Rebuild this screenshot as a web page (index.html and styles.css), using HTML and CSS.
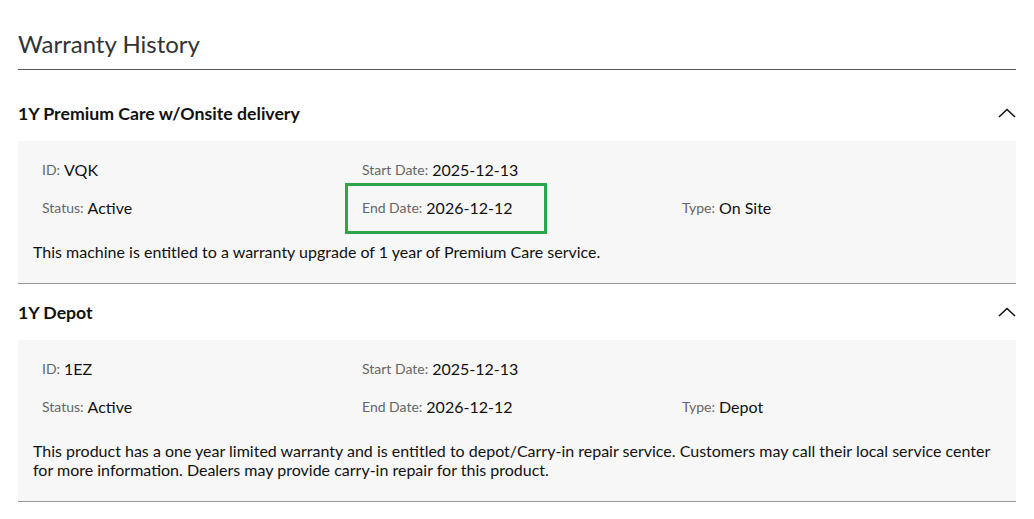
FILE: index.html
```html
<!DOCTYPE html>
<html lang="en">
<head>
<meta charset="utf-8">
<title>Warranty History</title>
<link rel="stylesheet" href="styles.css">
</head>
<body>
<div class="page">
  <h1 class="page-title">Warranty History</h1>

  <section class="warranty first">
    <div class="warranty-head">
      <h2 class="warranty-name">1Y Premium Care w/Onsite delivery</h2>
      <svg class="chevron" width="18" height="10" viewBox="0 0 18 10"><polyline points="1,9 9,1.5 17,9" fill="none" stroke="#111" stroke-width="1.6"/></svg>
    </div>
    <div class="panel">
      <div class="fields">
        <div class="field"><span class="label">ID:</span> <span class="value">VQK</span></div>
        <div class="field"><span class="label">Start Date:</span> <span class="value">2025-12-13</span></div>
        <div class="field"></div>
        <div class="field"><span class="label">Status:</span> <span class="value">Active</span></div>
        <div class="field highlighted"><span class="label">End Date:</span> <span class="value">2026-12-12</span></div>
        <div class="field"><span class="label">Type:</span> <span class="value">On Site</span></div>
      </div>
      <p class="desc">This machine is entitled to a warranty upgrade of 1 year of Premium Care service.</p>
    </div>
  </section>

  <section class="warranty">
    <div class="warranty-head">
      <h2 class="warranty-name">1Y Depot</h2>
      <svg class="chevron" width="18" height="10" viewBox="0 0 18 10"><polyline points="1,9 9,1.5 17,9" fill="none" stroke="#111" stroke-width="1.6"/></svg>
    </div>
    <div class="panel">
      <div class="fields">
        <div class="field"><span class="label">ID:</span> <span class="value">1EZ</span></div>
        <div class="field"><span class="label">Start Date:</span> <span class="value">2025-12-13</span></div>
        <div class="field"></div>
        <div class="field"><span class="label">Status:</span> <span class="value">Active</span></div>
        <div class="field"><span class="label">End Date:</span> <span class="value">2026-12-12</span></div>
        <div class="field"><span class="label">Type:</span> <span class="value">Depot</span></div>
      </div>
      <p class="desc">This product has a one year limited warranty and is entitled to depot/Carry-in repair service. Customers may call their local service center for more information. Dealers may provide carry-in repair for this product.</p>
    </div>
  </section>
</div>
</body>
</html>
```

FILE: styles.css
```css
* { box-sizing: border-box; }
html, body { margin: 0; padding: 0; background: #fff; }
body {
  font-family: Lato, "Open Sans", Arial, sans-serif;
  color: #111;
}
.page {
  padding: 0 18px;
}
.page-title {
  margin: 0;
  padding-top: 29px;
  font-size: 24px;
  font-weight: 400;
  line-height: 29px;
  color: #333;
  padding-bottom: 11px;
  border-bottom: 1px solid #555;
}
.warranty {
  border-bottom: 1px solid #999;
}
.warranty-head {
  display: flex;
  align-items: center;
  justify-content: space-between;
  height: 56px;
  padding-top: 2px;
}
.warranty.first .warranty-head {
  height: 71px;
  padding-top: 17px;
}
.warranty-name {
  margin: 0;
  font-size: 17.7px;
  font-weight: 700;
  line-height: 22px;
  color: #111;
}
.chevron { display: block; margin-top: -2px; }
.panel {
  background: #f7f7f7;
  padding: 9px 15px 22px;
}
.fields {
  display: grid;
  grid-template-columns: 320px 320px 1fr;
  grid-auto-rows: 38px;
  padding-left: 9px;
}
.field {
  display: flex;
  align-items: center;
  gap: 4px;
  white-space: nowrap;
}
.label {
  font-size: 14px;
  color: #666;
}
.value {
  font-size: 16px;
  color: #111;
}
.highlighted { position: relative; }
.highlighted::after {
  content: "";
  position: absolute;
  left: -17px;
  top: -5px;
  width: 196px;
  height: 45px;
  border: 3px solid #2ba64b;
  pointer-events: none;
}
.desc {
  margin: 16px 0 0;
  font-size: 16px;
  line-height: 19px;
  color: #111;
}
```
